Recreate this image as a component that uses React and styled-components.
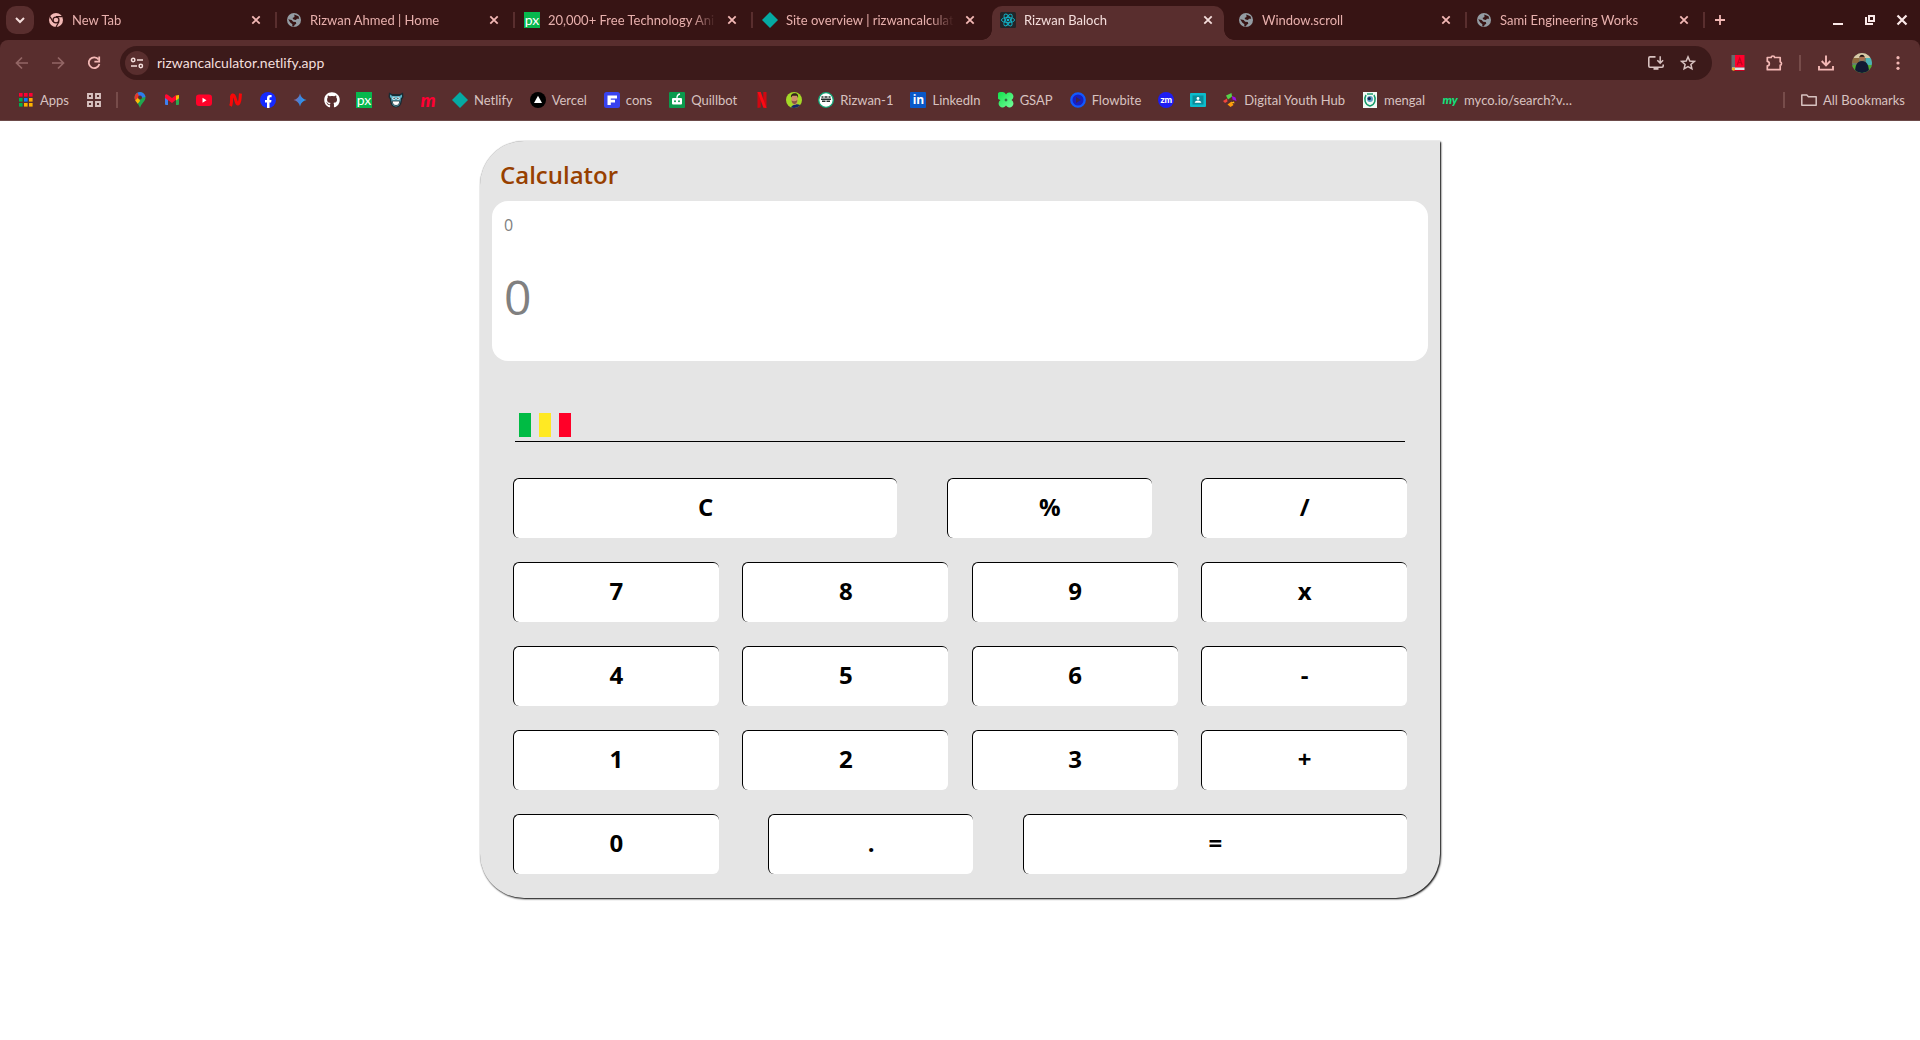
import React from 'react';
import styled, { createGlobalStyle, css } from 'styled-components';
import { FaGithub } from 'react-icons/fa';

const c = {
  strip: '#371414',
  bar: '#592e2e',
  field: '#3c1a1a',
  pink: '#f3b8b5',
  tabText: '#e8b0ad',
  light: '#f5dedc',
  label: '#d8c2c0',
  rule: '#774c4a',
};

const GlobalStyle = createGlobalStyle`
  *, *::before, *::after { box-sizing: border-box; }
  body { margin: 0; background: #fff; font-family: Lato, "Noto Sans", sans-serif; }
  button, input { font: inherit; color: inherit; border: 0; padding: 0; margin: 0; background: none; }
  a { color: inherit; text-decoration: none; }
  svg { display: block; flex: none; }
`;

/* ---------- browser frame ---------- */

const Browser = styled.header`
  background: ${c.strip};
  color: ${c.label};
`;

const TabStrip = styled.div`
  display: flex;
  height: 40px;
  padding: 6px 2px 0 6px;
`;

const SearchTabs = styled.button`
  display: grid;
  place-items: center;
  flex: none;
  width: 28px;
  height: 28px;
  margin-right: 6px;
  border-radius: 10px;
  background: ${c.bar};
  color: ${c.light};
`;

const Tabs = styled.div`
  display: flex;
  flex: 0 1 1666px;
  min-width: 0;
`;

const Tab = styled.div`
  position: relative;
  display: flex;
  align-items: center;
  gap: 8px;
  flex: 1 1 0;
  min-width: 0;
  margin-right: 6px;
  padding: 0 8px 6px;
  font-size: 13px;
  line-height: 20px;
  color: ${(p) => (p.$active ? c.light : c.tabText)};

  ${(p) => p.$divider && css`
    &::after {
      content: '';
      position: absolute;
      right: -5px;
      top: 6px;
      width: 2px;
      height: 16px;
      background: ${c.bar};
    }
  `}

  ${(p) => p.$active && css`
    border-radius: 10px 10px 0 0;
    background: ${c.bar};
    &::before, &::after {
      content: '';
      position: absolute;
      bottom: 0;
      width: 10px;
      height: 10px;
    }
    &::before {
      right: 100%;
      background: radial-gradient(circle at 0 0, transparent 9.5px, ${c.bar} 10px);
    }
    &::after {
      left: 100%;
      background: radial-gradient(circle at 100% 0, transparent 9.5px, ${c.bar} 10px);
    }
  `}
`;

const TabTitle = styled.span`
  flex: 1;
  min-width: 0;
  overflow: hidden;
  white-space: nowrap;
  mask-image: linear-gradient(to left, transparent, #000 24px);
`;

const IconButton = styled.button`
  display: grid;
  place-items: center;
  flex: none;
  width: ${(p) => p.$size || 36}px;
  height: ${(p) => p.$tall || 28}px;
  color: ${(p) => p.$color || c.pink};
`;

const WindowControls = styled.div`
  display: flex;
  margin-left: auto;
`;

const Toolbar = styled.div`
  display: flex;
  align-items: center;
  height: 40px;
  padding: 6px 4px 0;
  background: ${c.bar};
  border-radius: 8px 8px 0 0;
`;

const Omnibox = styled.div`
  display: flex;
  align-items: center;
  flex: 1;
  min-width: 0;
  height: 34px;
  margin: 0 8px;
  padding: 0 8px 0 5px;
  border-radius: 17px;
  background: ${c.field};
`;

const SiteInfo = styled.button`
  display: grid;
  place-items: center;
  flex: none;
  width: 24px;
  height: 24px;
  border-radius: 12px;
  background: ${c.bar};
  color: ${c.light};
`;

const Address = styled.input`
  flex: 1;
  min-width: 0;
  margin-left: 8px;
  font-size: 14px;
  line-height: 20px;
  color: #f3dfdd;
  outline: none;
`;

const BookmarksBar = styled.nav`
  display: flex;
  align-items: center;
  gap: 16px;
  height: 41px;
  padding: 0 14px 0 18px;
  border-bottom: 1px solid #6c4a49;
  background: ${c.bar};
  font-size: 13px;
  line-height: 20px;
`;

const Bookmark = styled.a`
  display: flex;
  align-items: center;
  gap: 6px;
  flex: none;
  white-space: nowrap;
`;

const BookmarkLabel = styled.span`
  padding-right: 1px;
`;

const Rule = styled.span`
  flex: none;
  width: 2px;
  height: 16px;
  margin: ${(p) => p.$margin || '0 -2px'};
  background: ${c.rule};
`;

const Spacer = styled.span`
  flex: 1;
`;

const Badge = styled.span`
  display: grid;
  place-items: center;
  flex: none;
  width: 16px;
  height: 16px;
  border-radius: ${(p) => p.$radius || 0}px;
  background: ${(p) => p.$bg || 'none'};
  color: ${(p) => p.$fg || '#fff'};
  font: ${(p) => p.$font};
`;

/* ---------- calculator ---------- */

const Card = styled.main`
  width: 50%;
  min-width: 320px;
  margin: 20px auto;
  padding-bottom: 24px;
  border-radius: 44px 0 44px 44px;
  background: #e5e5e5;
  box-shadow: 1px 1px 2px #000, 0 0 1px rgba(0, 0, 0, 0.3);
  font-family: "Open Sans", "Noto Sans", sans-serif;
`;

const Title = styled.h1`
  margin: 0;
  padding: 18px 20px 10px;
  font-size: 24px;
  line-height: 32px;
  font-weight: 600;
  color: #974000;
`;

const Screen = styled.div`
  display: flex;
  flex-direction: column;
  gap: 24px;
  min-height: 160px;
  margin: 0 12px;
  padding: 12px;
  border-radius: 16px;
  background: #fff;
`;

const Readout = styled.input`
  width: 100%;
  color: #808080;
  outline: none;
  font-size: ${(p) => (p.$large ? 48 : 16)}px;
  line-height: ${(p) => (p.$large ? 72 : 24)}px;
  height: ${(p) => (p.$large ? 72 : 24)}px;
`;

const Lights = styled.div`
  display: flex;
  gap: 8px;
  margin: 52px 35px 36px;
  padding: 0 4px 4px;
  border-bottom: 1px solid #000;
`;

const Light = styled.span`
  width: 12px;
  height: 24px;
  background: ${(p) => p.$color};
`;

const Keypad = styled.div`
  display: flex;
  flex-direction: column;
  gap: 24px;
  padding: 0 33px;
`;

const KeyRow = styled.div`
  display: flex;
  justify-content: space-between;
`;

const Key = styled.button`
  width: ${(p) => (p.$wide ? '43%' : '23%')};
  height: 60px;
  padding-bottom: 4px;
  border-top: 1px solid #000;
  border-left: 1px solid #000;
  border-radius: 6px;
  background: #fff;
  color: #000;
  font-size: 24px;
  line-height: 32px;
  font-weight: 700;
  cursor: pointer;
`;

/* ---------- icons ---------- */

const Svg = ({ s = 16, children }) => (
  <svg width={s} height={s} viewBox={`0 0 ${s} ${s}`} fill="none" aria-hidden="true">{children}</svg>
);

const Close = () => <Svg><path d="M4.3 4.3l7.4 7.4M11.7 4.3l-7.4 7.4" stroke="currentColor" strokeWidth="1.8" /></Svg>;
const Chevron = () => <Svg><path d="M4 6l4 4 4-4" stroke="currentColor" strokeWidth="2" /></Svg>;
const ChromeMark = () => (
  <Svg>
    <circle cx="8" cy="8" r="7" fill={c.pink} />
    <circle cx="8" cy="8" r="3.6" fill={c.strip} />
    <circle cx="8" cy="8" r="2.3" fill={c.pink} />
    <path d="M8 4.6h6.2M5 9.7L2 4.6M11 9.7L8 15" stroke={c.strip} strokeWidth="1.2" />
  </Svg>
);
const Globe = () => (
  <Svg>
    <circle cx="8" cy="8" r="7" fill="#949ca3" />
    <path d="M8.3 2.6l4.2 1.7.7 2.4-2.3.1-.9 1.3-2.5-.5-1-1.6 2-.9zM2.2 7.2l3.4.7 1.6 1.8 2.6.3.5 1.7-1.9 1.2-.2 1.6-2-.2.2-2.1-2.2-1.6z" fill={c.strip} />
  </Svg>
);
const Diamond = () => <Svg><path d="M8 0l8 8-8 8-8-8z" fill="#05aaa3" /></Svg>;
const Px = () => <Badge $bg="#07b84e" $font="400 14px/12px Lato, sans-serif">px</Badge>;
const ReactMark = () => (
  <Svg>
    <rect width="16" height="16" rx="1.5" fill="#222528" />
    <g stroke="#12b4c9" strokeWidth=".9">
      <ellipse cx="8" cy="8" rx="6.6" ry="2.6" />
      <ellipse cx="8" cy="8" rx="6.6" ry="2.6" transform="rotate(60 8 8)" />
      <ellipse cx="8" cy="8" rx="6.6" ry="2.6" transform="rotate(120 8 8)" />
    </g>
    <circle cx="8" cy="8" r="1.3" fill="#12b4c9" />
  </Svg>
);
const Plus = () => <Svg><path d="M8 3v10M3 8h10" stroke="currentColor" strokeWidth="1.8" /></Svg>;
const Minimize = () => <Svg><path d="M3 12h10" stroke="currentColor" strokeWidth="2" /></Svg>;
const Restore = () => (
  <Svg>
    <path d="M7 4h5v5H7z" stroke="currentColor" strokeWidth="2" />
    <path d="M4 5v7h7" stroke="currentColor" strokeWidth="2" />
  </Svg>
);
const CloseWindow = () => <Svg><path d="M3.5 3.5l9 9M12.5 3.5l-9 9" stroke="currentColor" strokeWidth="2.2" /></Svg>;
const Back = () => <Svg><path d="M14 8H3M8 2.5L2.5 8 8 13.5" stroke="currentColor" strokeWidth="1.7" /></Svg>;
const Forward = () => <Svg><path d="M2 8h11M8 2.5L13.5 8 8 13.5" stroke="currentColor" strokeWidth="1.7" /></Svg>;
const Reload = () => (
  <Svg>
    <path d="M12.6 4.6A5.4 5.4 0 1 0 13.4 9" stroke="currentColor" strokeWidth="1.8" />
    <path d="M13.2 1.6v5H8.4" stroke="currentColor" strokeWidth="1.8" />
  </Svg>
);
const Tune = () => (
  <Svg>
    <circle cx="4.2" cy="5" r="1.7" stroke="currentColor" strokeWidth="1.5" />
    <path d="M8 5h6M2 11h6" stroke="currentColor" strokeWidth="1.6" />
    <circle cx="11.8" cy="11" r="1.7" stroke="currentColor" strokeWidth="1.5" />
  </Svg>
);
const Install = () => (
  <Svg>
    <path d="M7.5 1.9H2A1.2 1.2 0 0 0 .8 3.1v8A1.2 1.2 0 0 0 2 12.3h12a1.2 1.2 0 0 0 1.2-1.2V9.5" stroke="currentColor" strokeWidth="1.6" />
    <path d="M5.5 12.5h5v2.3h-5z" fill="currentColor" />
    <path d="M12.2 1.2v6.6M9.3 5.2l2.9 2.9 2.9-2.9" stroke="currentColor" strokeWidth="1.5" />
  </Svg>
);
const Star = () => <Svg><path d="M8 1.9L9.8 6l4.5.4-3.4 3 1 4.4L8 11.5l-3.9 2.3 1-4.4-3.4-3L6.200 6z" stroke="currentColor" strokeWidth="1.5" /></Svg>;
const Book = () => (
  <Svg>
    <path d="M1.5 0H5v15H1.5z" fill="#666a6c" />
    <path d="M5 0h9.5v12.500H5z" fill="#ff002c" />
    <path d="M7.200 10.200L9.700 3l2.500 7.200M8.100 7.700h3.200" stroke="#c4001f" strokeWidth="1.2" />
    <path d="M2 12.500h12.500V15H2z" fill="#dfe3e6" />
    <path d="M4 15h10.500v1H4z" fill="#c40020" />
    <circle cx="3.500" cy="14" r="1.7" fill="#f0b429" />
  </Svg>
);
const Puzzle = () => (
  <Svg s={18}>
    <path d="M2.300 3.500h3.900c0-2 3.400-2 3.400 0h5.600v4.300c1.700 0 1.700 3.400 0 3.400v4.500H2.300v-3.800c2.700-.2 2.700-4.300 0-4.500z" stroke="currentColor" strokeWidth="1.7" strokeLinejoin="round" />
  </Svg>
);
const Download = () => (
  <Svg s={18}>
    <path d="M9 1.500V11M4.700 7L9 11.300 13.300 7M2 12v3.600h14V12" stroke="currentColor" strokeWidth="1.9" />
  </Svg>
);
const Avatar = () => (
  <Svg s={20}>
    <clipPath id="avatar"><circle cx="10" cy="10" r="10" /></clipPath>
    <g clipPath="url(#avatar)">
      <path d="M0 0h20v20H0z" fill="#6b7f6a" />
      <path d="M0 0h20v5H0z" fill="#d8c9a6" />
      <path d="M0 5h7v5H0z" fill="#8d6b3f" />
      <path d="M14 5h6v7h-6z" fill="#4bb3b5" />
      <path d="M0 12h20v8H0z" fill="#4fae2f" />
      <path d="M3 20c0-7 1.500-12 7-12s7 5 7 12z" fill="#121a33" />
      <circle cx="10" cy="5.200" r="2.600" fill="#a9714f" />
      <path d="M7.300 4.800c0-4 5.400-4 5.400 0l-1-1H8.300z" fill="#1b1413" />
    </g>
  </Svg>
);
const Dots = () => (
  <Svg>
    <circle cx="8" cy="2.700" r="1.600" fill="currentColor" />
    <circle cx="8" cy="8" r="1.600" fill="currentColor" />
    <circle cx="8" cy="13.300" r="1.600" fill="currentColor" />
  </Svg>
);

const appDots = ['#ff0033', '#ff0033', '#ff0033', '#00b050', '#0a7cff', '#ffa800', '#00b050', '#ffb300', '#ffb300'];
const AppsIcon = () => (
  <Svg>{appDots.map((f, i) => <rect key={i} x={1 + (i % 3) * 5} y={1 + Math.floor(i / 3) * 5} width="3.600" height="3.600" fill={f} />)}</Svg>
);
const GridIcon = () => (
  <Svg><path d="M2 2h4v4H2zM10 2h4v4h-4zM2 10h4v4H2zM10 10h4v4h-4z" stroke={c.label} strokeWidth="1.900" /></Svg>
);
const Maps = () => (
  <Svg>
    <clipPath id="pin"><path d="M8 0a5.500 5.500 0 0 0-5.500 5.600C2.500 9.500 6.500 11 8 16c1.500-5 5.500-6.500 5.500-10.400A5.500 5.500 0 0 0 8 0z" /></clipPath>
    <g clipPath="url(#pin)">
      <path d="M0 0h16v16H0z" fill="#1fa750" />
      <path d="M0 0h16v4.500L8 6z" fill="#2f7bf0" />
      <path d="M0 0h5l3 5.500-4.500 5L0 8z" fill="#e8362b" />
      <path d="M2 9.500L7 5l1 4-3 3.500z" fill="#fbbb07" />
    </g>
    <circle cx="8" cy="5.500" r="2" fill={c.bar} />
  </Svg>
);
const Gmail = () => (
  <Svg>
    <path d="M1 3.500l3 2V13H2a1 1 0 0 1-1-1z" fill="#3f7ff0" />
    <path d="M15 3.500l-3 2V13h2a1 1 0 0 0 1-1z" fill="#2aa84f" />
    <path d="M12 3.500L15 3v3.200l-3 2.300z" fill="#fbbc04" />
    <path d="M1 3.200C1.500 2 3 2.200 4 3l4 3 4-3v4.700L8 11 1 6z" fill="#ff0a32" />
  </Svg>
);
const YouTube = () => (
  <Svg><rect y="2.500" width="16" height="11.500" rx="3" fill="#ff0229" /><path d="M6.500 5.800v5l4-2.500z" fill="#fff" /></Svg>
);
const WavyN = () => (
  <Svg><path d="M2.500 14c1.500-2.500 1-7 1-9.500C5 1 6.500 4 7.500 7.500s2 6 3.500 3.500 1-6 1.500-9.500" stroke="#f70808" strokeWidth="3" /></Svg>
);
const Facebook = () => (
  <Svg><circle cx="8" cy="8" r="8" fill="#1429ff" /><path d="M7 16v-5.500H5V8h2V6.300C7 4 8.300 3 10 3l1.600.1v2.200h-1C9.700 5.300 9.500 5.800 9.500 6.500V8h2l-.4 2.500H9.500V16z" fill="#fff" /></Svg>
);
const Gemini = () => (
  <Svg>
    <linearGradient id="gem" x1="0" y1="0" x2="16" y2="4" gradientUnits="userSpaceOnUse">
      <stop offset=".1" stopColor="#a8648c" /><stop offset=".6" stopColor="#3b86e0" /><stop offset="1" stopColor="#1fa7ff" />
    </linearGradient>
    <path d="M8 1.500C8.800 5 11 7.200 14.500 8 11 8.800 8.800 11 8 14.500 7.200 11 5 8.800 1.500 8 5 7.200 7.200 5 8 1.500z" fill="url(#gem)" />
  </Svg>
);
const Imp = () => (
  <Svg>
    <path d="M1 .5L4 2h8l3-1.500.5 4.500-1.500 2.500c0 5-2.500 8-6 8s-6-3-6-8L.5 5z" fill="#1a2b33" />
    <path d="M2 2.500L4.500 4h7L14 2.500 14 5l-1.300 1.500c0 5-1.700 8-4.700 8s-4.700-3-4.700-8L2 5z" fill="#5cb0c4" />
    <circle cx="5.900" cy="6.200" r="1.500" fill="#e9fbff" /><circle cx="10.100" cy="6.200" r="1.500" fill="#e9fbff" />
    <circle cx="6.100" cy="6.200" r=".7" fill="#10181c" /><circle cx="9.900" cy="6.200" r=".7" fill="#10181c" />
    <path d="M4.200 9h7.600c0 3-2 4.500-3.800 4.500S4.200 12 4.200 9z" fill="#fff" stroke="#1a2b33" strokeWidth=".8" />
  </Svg>
);
const ScriptM = () => <Badge $fg="#ff0033" $font="italic 900 19px/14px Lato, sans-serif">m</Badge>;
const Vercel = () => <Svg><circle cx="8" cy="8" r="8" fill="#000" /><path d="M8 3.800l4 7.200H4z" fill="#fff" /></Svg>;
const FMark = () => <Svg><rect width="16" height="16" rx="2.500" fill="#3843ef" /><path d="M3.500 3.500H13v3H6.800v1.300H11v2.700H6.800v2.500H3.500z" fill="#fff" /></Svg>;
const Robot = () => (
  <Svg>
    <rect width="16" height="16" rx="1" fill="#0b9a4d" />
    <path d="M8 6.500c-.2-2.500.5-4 3-4.500" stroke="#fff" strokeWidth="1.300" />
    <rect x="3" y="6" width="10" height="6.500" rx="1" fill="#fff" />
    <circle cx="6" cy="9.200" r="1" fill="#0b9a4d" /><circle cx="10" cy="9.200" r="1" fill="#0b9a4d" />
  </Svg>
);
const Netflix = () => (
  <Svg><path d="M3.500 0h3.200v15.500l-3.200.5zM9.300 0h3.200v16l-3.200-.5z" fill="#cf0812" /><path d="M3.500 0h3.200l5.800 16-3.200-.5z" fill="#fb0a14" /></Svg>
);
const Face = () => (
  <Svg>
    <clipPath id="face"><circle cx="8" cy="8" r="8" /></clipPath>
    <g clipPath="url(#face)">
      <path d="M0 0h16v16H0z" fill="#a4d827" />
      <path d="M5 16c0-3 6-5 9-3l2 3z" fill="#17266b" />
      <path d="M5.500 3.500h6V9c0 5-5 5-6 0z" fill="#cf8f6c" />
      <path d="M5 5.500C4.500 2 7 1 9 1.200c3 0 3.500 2.500 3 4.800l-1-2.200H6.500z" fill="#33201d" />
      <path d="M5.500 8.500c1.800 1 4 1 5.800-.5 0 5-5 5.500-5.800.5z" fill="#8a5741" />
    </g>
  </Svg>
);
const RoundSeal = () => (
  <Svg>
    <circle cx="8" cy="8" r="7.300" fill="#fff" stroke="#10a878" strokeWidth="1.300" />
    <path d="M3.500 5h2M6.500 5h3M10.500 5h2M3 7.200h10M4 9.200h3.500M8.500 9.200H12" stroke="#26302e" strokeWidth="1.400" />
  </Svg>
);
const LinkedIn = () => <Badge $bg="#0a58c8" $radius={1} $font='700 12px/14px "Open Sans", sans-serif'>in</Badge>;
const Clover = () => (
  <Svg>
    <linearGradient id="clv" x1="0" y1="0" x2="16" y2="16" gradientUnits="userSpaceOnUse">
      <stop stopColor="#0fe04a" /><stop offset="1" stopColor="#7bffa0" />
    </linearGradient>
    <path d="M4 0a4 4 0 0 1 4 2.500A4 4 0 1 1 13.500 8 4 4 0 1 1 8 13.500 4 4 0 1 1 2.500 8 4 4 0 0 1 4 0z" fill="url(#clv)" />
    <path d="M8 6l.6 1.400L10 8l-1.400.6L8 10l-.6-1.400L6 8l1.400-.6z" fill="#2a4030" />
  </Svg>
);
const Flow = () => (
  <Svg>
    <circle cx="8" cy="8" r="6.700" fill="#1a1fc0" stroke="#1159ff" strokeWidth="2.300" />
    <path d="M6 5v6l5-3z" fill="#3c2750" />
  </Svg>
);
const Zm = () => <Badge $bg="#1d1df2" $radius={8} $font="900 9px/12px Lato, sans-serif">zm</Badge>;
const Classroom = () => (
  <Svg>
    <rect y="1" width="16" height="14" rx="1" fill="#0bbccb" /><path d="M2.500 3.500h11v9h-11z" fill="#0a8c9a" />
    <circle cx="8" cy="6.500" r="1.400" fill="#fff" /><path d="M4.700 10.800c.5-3 6.100-3 6.600 0z" fill="#fff" />
  </Svg>
);
const Pinwheel = () => (
  <Svg>
    <path d="M4 3.500L9.500 1l.5 3.500-4 3z" fill="#57d24a" />
    <path d="M10 4l3.500 1.500L14.500 9l-4-1.500z" fill="#9b12e8" />
    <path d="M5.500 12.500l4-3 2 3.500-3 2z" fill="#ff9d0a" />
    <path d="M1 9l4-2.500.5 3L3 11z" fill="#f2453c" />
    <path d="M9 10.500l3-1 .5 2z" fill="#ffc417" />
  </Svg>
);
const Crest = () => (
  <Svg>
    <rect x="1" width="14" height="16" fill="#f3faf6" />
    <path d="M4 3C1.500 7 3 13 8 14c5-1 6.500-7 4-11" stroke="#129a68" strokeWidth="1.500" />
    <circle cx="8" cy="7" r="3" fill="#5a9fc4" /><circle cx="7.300" cy="6.600" r="1.600" fill="#15254f" />
    <path d="M5 2h6" stroke="#129a68" strokeWidth="1.400" />
  </Svg>
);
const My = () => <Badge $fg="#12e07c" $font="italic 900 12px/12px Lato, sans-serif">my</Badge>;
const Folder = () => <Svg><path d="M.8 3h5l1.600 1.700h7.800v8.500H.8z" stroke={c.label} strokeWidth="1.500" strokeLinejoin="round" /></Svg>;
const GitHub = () => <FaGithub size={16} color="#fff" />;

/* ---------- data ---------- */

const tabs = [
  { icon: ChromeMark, title: 'New Tab', divider: true },
  { icon: Globe, title: 'Rizwan Ahmed | Home', divider: true },
  { icon: Px, title: '20,000+ Free Technology Ani', divider: true },
  { icon: Diamond, title: 'Site overview | rizwancalculat' },
  { icon: ReactMark, title: 'Rizwan Baloch', active: true },
  { icon: Globe, title: 'Window.scroll', divider: true },
  { icon: Globe, title: 'Sami Engineering Works', divider: true },
];

const bookmarks = [
  [Maps, '', 'Maps'], [Gmail, '', 'Gmail'], [YouTube, '', 'YouTube'], [WavyN, '', 'N'],
  [Facebook, '', 'Facebook'], [Gemini, '', 'Gemini'], [GitHub, '', 'GitHub'],
  [Px, '', 'Pixabay'], [Imp, '', 'Imp'], [ScriptM, '', 'M'], [Diamond, 'Netlify'], [Vercel, 'Vercel'],
  [FMark, 'cons'], [Robot, 'Quillbot'], [Netflix, '', 'Netflix'], [Face, '', 'Portrait'],
  [RoundSeal, 'Rizwan-1'], [LinkedIn, 'LinkedIn'], [Clover, 'GSAP'], [Flow, 'Flowbite'],
  [Zm, '', 'Zoom'], [Classroom, '', 'Classroom'], [Pinwheel, 'Digital Youth Hub'],
  [Crest, 'mengal'], [My, 'myco.io/search?v…'],
];

const keys = [
  [['C', true], ['%'], ['/']],
  [['7'], ['8'], ['9'], ['x']],
  [['4'], ['5'], ['6'], ['-']],
  [['1'], ['2'], ['3'], ['+']],
  [['0'], ['.'], ['=', true]],
];

function BookmarkLink({ icon: Icon, label, name }) {
  return (
    <Bookmark href="#" aria-label={label ? undefined : name}>
      <Icon />
      {label && <BookmarkLabel>{label}</BookmarkLabel>}
    </Bookmark>
  );
}

export default function App() {
  return (
    <>
      <GlobalStyle />
      <Browser>
        <TabStrip>
          <SearchTabs aria-label="Search tabs"><Chevron /></SearchTabs>
          <Tabs>
            {tabs.map(({ icon: Icon, title, active, divider }) => (
              <Tab key={title} $active={active} $divider={divider}>
                <Icon />
                <TabTitle>{title}</TabTitle>
                <IconButton $size={16} $tall={16} $color={active ? c.light : c.pink} aria-label={`Close ${title}`}><Close /></IconButton>
              </Tab>
            ))}
          </Tabs>
          <IconButton $size={28} aria-label="New tab"><Plus /></IconButton>
          <WindowControls>
            <IconButton $size={32} $color="#fbe9e8" aria-label="Minimize"><Minimize /></IconButton>
            <IconButton $size={32} $color="#fbe9e8" aria-label="Restore"><Restore /></IconButton>
            <IconButton $size={32} $color="#fbe9e8" aria-label="Close window"><CloseWindow /></IconButton>
          </WindowControls>
        </TabStrip>

        <Toolbar>
          <IconButton $color="#936665" aria-label="Back"><Back /></IconButton>
          <IconButton $color="#936665" aria-label="Forward"><Forward /></IconButton>
          <IconButton aria-label="Reload"><Reload /></IconButton>
          <Omnibox>
            <SiteInfo aria-label="Site information"><Tune /></SiteInfo>
            <Address type="text" aria-label="Address" defaultValue="rizwancalculator.netlify.app" />
            <IconButton $size={32} $color={c.label} aria-label="Install app"><Install /></IconButton>
            <IconButton $size={32} $color={c.label} aria-label="Bookmark this tab"><Star /></IconButton>
          </Omnibox>
          <IconButton aria-label="Dictionary"><Book /></IconButton>
          <IconButton aria-label="Extensions"><Puzzle /></IconButton>
          <Rule $margin="0 7px" />
          <IconButton aria-label="Downloads"><Download /></IconButton>
          <IconButton aria-label="Profile"><Avatar /></IconButton>
          <IconButton aria-label="Menu"><Dots /></IconButton>
        </Toolbar>

        <BookmarksBar aria-label="Bookmarks">
          <BookmarkLink icon={AppsIcon} label="Apps" />
          <BookmarkLink icon={GridIcon} name="Tab groups" />
          <Rule />
          {bookmarks.map(([icon, label, name]) => (
            <BookmarkLink key={label || name} icon={icon} label={label} name={name} />
          ))}
          <Spacer />
          <Rule $margin="0" />
          <BookmarkLink icon={Folder} label="All Bookmarks" />
        </BookmarksBar>
      </Browser>

      <Card>
        <Title>Calculator</Title>
        <Screen>
          <Readout type="text" readOnly value="0" aria-label="Expression" />
          <Readout $large type="text" readOnly value="0" aria-label="Result" />
        </Screen>
        <Lights>
          <Light $color="#00bb44" />
          <Light $color="#ffe923" />
          <Light $color="#ff0028" />
        </Lights>
        <Keypad>
          {keys.map((row) => (
            <KeyRow key={row[0][0]}>
              {row.map(([label, wide]) => <Key key={label} type="button" $wide={wide}>{label}</Key>)}
            </KeyRow>
          ))}
        </Keypad>
      </Card>
    </>
  );
}
